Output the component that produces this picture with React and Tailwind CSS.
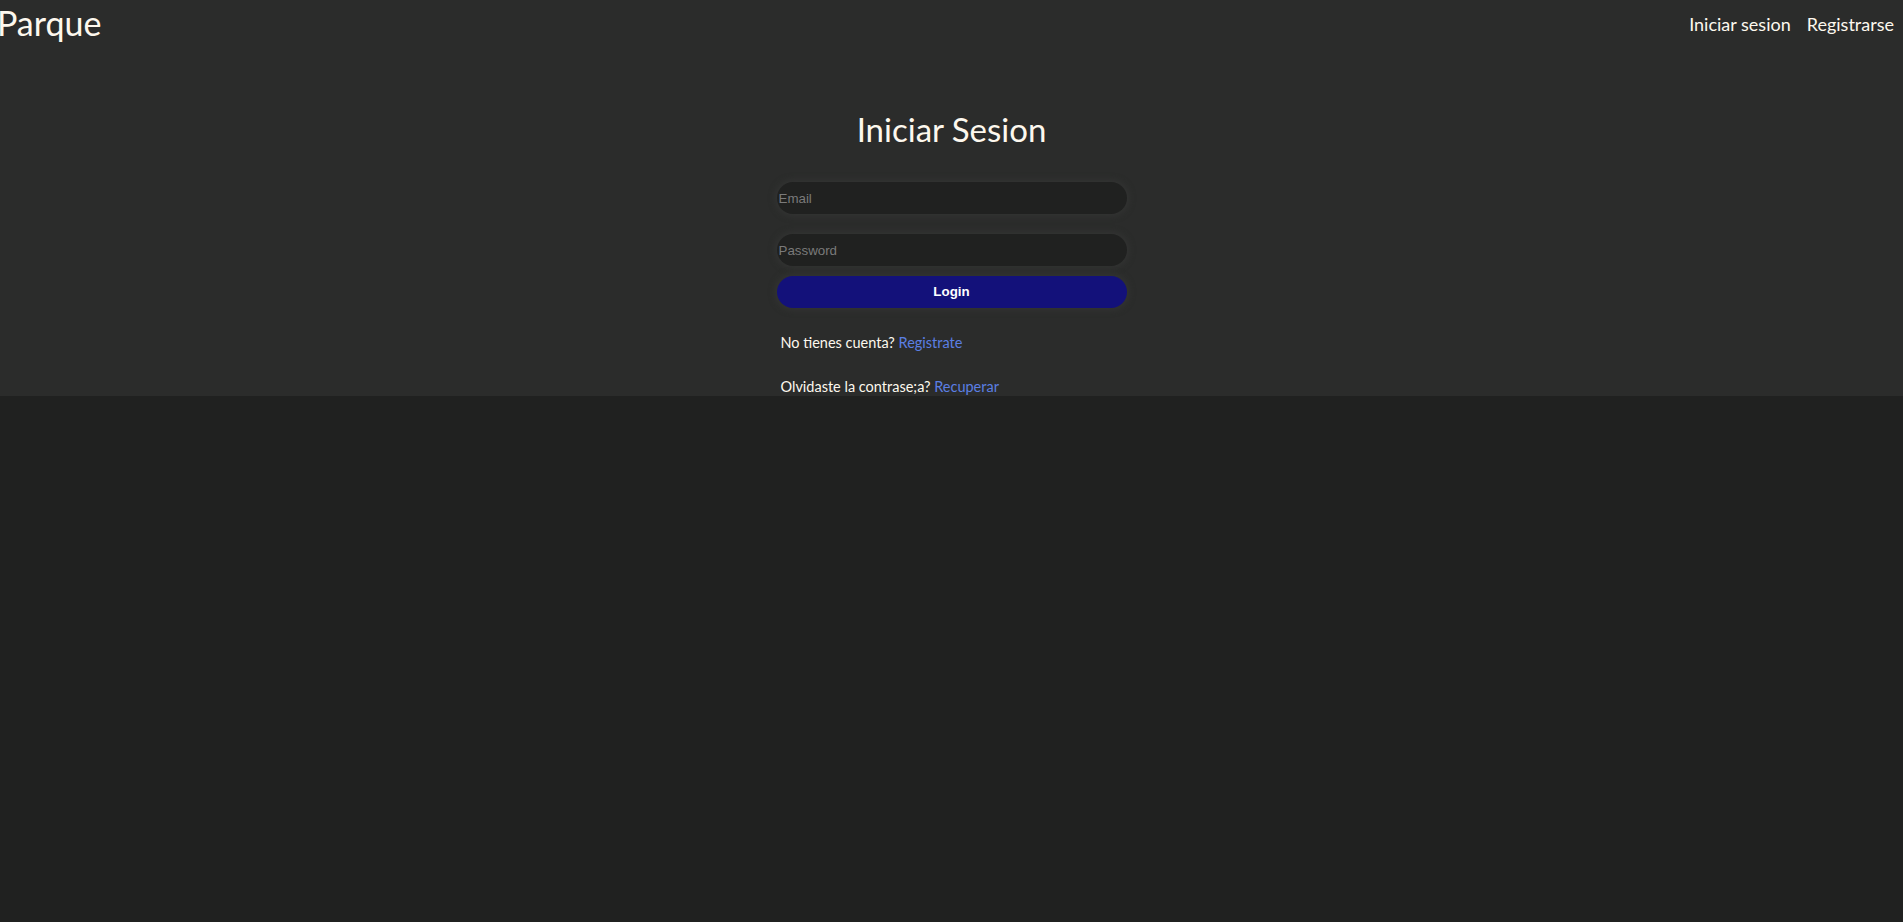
export default function App() {
  return (
    <div className="min-h-[922px] bg-[#202120] font-['Lato','Noto_Sans',sans-serif] text-[#fdf8ee]">
      <div className="h-[396px] bg-[#2b2c2b]">
        <nav className="flex h-[48px] items-center justify-between pr-[9px]">
          <span className="-ml-[3px] -mt-[3px] text-[34px] leading-none">Parque</span>
          <div className="flex items-center gap-[16px] text-[18px]">
            <a href="#">Iniciar sesion</a>
            <a href="#">Registrarse</a>
          </div>
        </nav>
        <div className="mx-auto flex w-[350px] flex-col pt-[62px]">
          <h1 className="text-center text-[33px] leading-[38px]">Iniciar Sesion</h1>
          <input
            type="email"
            placeholder="Email"
            className="mt-[34px] h-[32px] rounded-full bg-[#202120] px-[2px] font-['Liberation_Sans',Arial,sans-serif] text-[13.33px] text-white shadow-[0_0_6px_2px_#333433] outline-none placeholder:text-[#7a7a7a]"
          />
          <input
            type="password"
            placeholder="Password"
            className="mt-[20px] h-[32px] rounded-full bg-[#202120] px-[2px] font-['Liberation_Sans',Arial,sans-serif] text-[13.33px] text-white shadow-[0_0_6px_2px_#333433] outline-none placeholder:text-[#7a7a7a]"
          />
          <button className="mt-[10px] h-[32px] rounded-full bg-[#13117a] font-['Liberation_Sans',Arial,sans-serif] text-[13.33px] font-bold text-white shadow-[0_0_6px_2px_#333433]">
            Login
          </button>
          <p className="mt-[25px] pl-[4px] text-[14.5px] leading-[20px]">
            No tienes cuenta? <a href="#" className="text-[#5b7fe3]">Registrate</a>
          </p>
          <p className="mt-[24px] pl-[4px] text-[14.5px] leading-[20px]">
            Olvidaste la contrase;a? <a href="#" className="text-[#5b7fe3]">Recuperar</a>
          </p>
        </div>
      </div>
    </div>
  );
}
